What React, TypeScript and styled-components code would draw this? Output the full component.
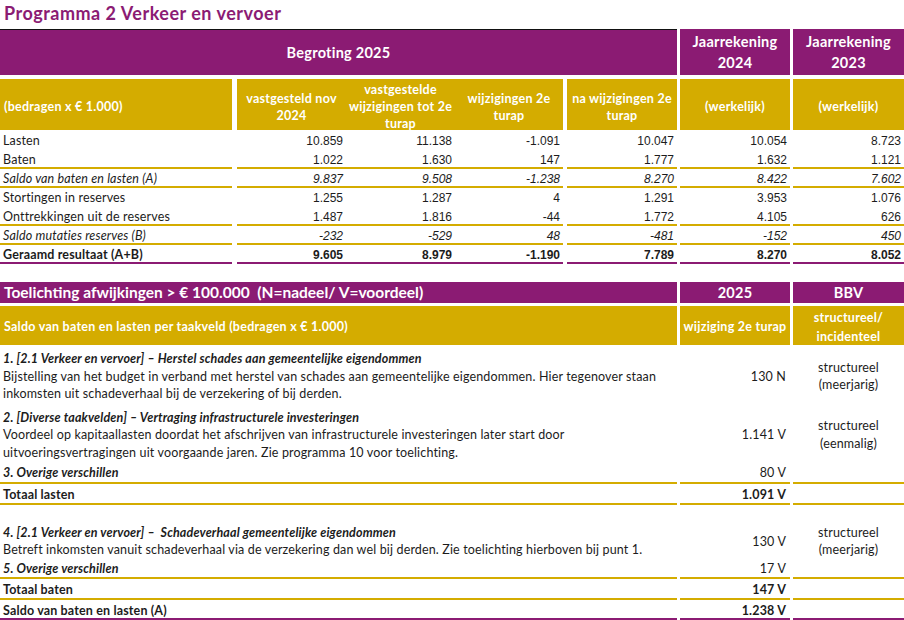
import React from "react";
import styled, { createGlobalStyle } from "styled-components";

const PURPLE = "#8b1b73";
const OCHRE = "#d4ac00";
const INK = "#1c1c1c";

const GlobalStyle = createGlobalStyle`
  html, body {
    margin: 0;
    padding: 0;
    background: #fff;
  }
  body {
    font-family: Lato, "Noto Sans", sans-serif;
    font-size: 12.5px;
    letter-spacing: 0.15px;
    color: ${INK};
  }
  * {
    box-sizing: border-box;
  }
`;

type Rule = "none" | "ochre" | "purple";
type Kind = "plain" | "italic" | "bold";

const ruleColor = (r: Rule) =>
  r === "ochre" ? OCHRE : r === "purple" ? PURPLE : "transparent";
const ruleLine = (r?: Rule) =>
  !r || r === "none" ? "none" : `2px solid ${ruleColor(r)}`;

const Page = styled.div`
  width: 904px;
  display: flex;
  flex-direction: column;
`;

const Title = styled.h1`
  margin: 0;
  height: 29px;
  padding: 3px 0 0 4px;
  font-size: 18px;
  line-height: 21px;
  letter-spacing: 0.5px;
  font-weight: 700;
  color: ${PURPLE};
`;

const BandRow = styled.div<{ $h: number; $mt?: number }>`
  display: flex;
  height: ${p => p.$h}px;
  margin-top: ${p => p.$mt ?? 0}px;
`;

const HeadCell = styled.div<{
  $w: number;
  $gap?: number;
  $tone: "purple" | "ochre";
  $size: number;
  $lh: number;
  $pt?: number;
  $ls?: number;
  $left?: boolean;
  $topRule?: boolean;
}>`
  flex: none;
  width: ${p => p.$w}px;
  margin-left: ${p => p.$gap ?? 0}px;
  background: ${p => (p.$tone === "purple" ? PURPLE : OCHRE)};
  border-top: ${p => (p.$topRule ? "1px solid #111" : "none")};
  color: #fff;
  font-size: ${p => p.$size}px;
  line-height: ${p => p.$lh}px;
  letter-spacing: ${p => p.$ls ?? 0.25}px;
  font-weight: 700;
  display: flex;
  align-items: center;
  justify-content: ${p => (p.$left ? "flex-start" : "center")};
  text-align: ${p => (p.$left ? "left" : "center")};
  padding: ${p => p.$pt ?? 0}px 2px 0 ${p => (p.$left ? 4 : 2)}px;
  white-space: pre;
  overflow: hidden;
`;

const DataRow = styled.div<{ $mt?: number }>`
  display: flex;
  height: 19px;
  margin-top: ${p => p.$mt ?? 0}px;
`;

const DataCell = styled.div<{
  $w: number;
  $gap?: number;
  $rule: Rule;
  $kind: Kind;
  $num?: boolean;
}>`
  flex: none;
  width: ${p => p.$w}px;
  margin-left: ${p => p.$gap ?? 0}px;
  border-bottom: 2px solid ${p => ruleColor(p.$rule)};
  padding: 2px ${p => (p.$num ? 3 : 0)}px 0 ${p => (p.$num ? 0 : 3)}px;
  display: flex;
  align-items: center;
  justify-content: ${p => (p.$num ? "flex-end" : "flex-start")};
  font-family: ${p =>
    p.$num ? `"Liberation Sans", Arial, sans-serif` : `Lato, "Noto Sans", sans-serif`};
  font-size: ${p => (p.$num ? 12 : 12.5)}px;
  letter-spacing: ${p => (p.$num ? 0 : 0.15)}px;
  font-style: ${p => (p.$kind === "italic" ? "italic" : "normal")};
  font-weight: ${p => (p.$kind === "bold" ? 700 : 400)};
  white-space: nowrap;
`;

const NoteRow = styled.div<{ $pt?: number }>`
  display: flex;
  padding-top: ${p => p.$pt ?? 0}px;
`;

const NoteText = styled.div<{ $rule?: Rule }>`
  flex: none;
  width: 677px;
  padding-left: 3px;
  line-height: 17.5px;
  border-bottom: ${p => ruleLine(p.$rule)};
  white-space: pre;
`;

const NoteTitle = styled.div`
  font-weight: 700;
  font-style: italic;
`;

const NoteValue = styled.div<{ $rule?: Rule; $bold?: boolean; $pt?: number }>`
  flex: none;
  width: 110px;
  margin-left: 3px;
  padding: ${p => p.$pt ?? 0}px 4px 0 0;
  display: flex;
  align-items: center;
  justify-content: flex-end;
  font-weight: ${p => (p.$bold ? 700 : 400)};
  border-bottom: ${p => ruleLine(p.$rule)};
`;

const NoteBbv = styled.div<{ $rule?: Rule }>`
  flex: none;
  width: 111px;
  margin-left: 3px;
  display: flex;
  flex-direction: column;
  align-items: center;
  justify-content: center;
  line-height: 17.5px;
  border-bottom: ${p => ruleLine(p.$rule)};
`;

const TotalRow = styled.div<{ $h: number }>`
  display: flex;
  height: ${p => p.$h}px;
`;

const TotalLabel = styled.div<{ $rule: Rule; $pt: number }>`
  flex: none;
  width: 677px;
  padding: ${p => p.$pt}px 0 0 3px;
  display: flex;
  align-items: center;
  font-weight: 700;
  border-bottom: ${p => ruleLine(p.$rule)};
`;

const Spacer = styled.div`
  height: 15px;
`;

const COLS = [
  { w: 232, gap: 0 },
  { w: 109, gap: 5 },
  { w: 109, gap: 0 },
  { w: 108, gap: 0 },
  { w: 110, gap: 4 },
  { w: 110, gap: 3 },
  { w: 111, gap: 3 },
];

const subHeads = [
  "(bedragen x € 1.000)",
  "vastgesteld nov\n2024",
  "vastgestelde\nwijzigingen tot 2e\nturap",
  "wijzigingen 2e\nturap",
  "na wijzigingen 2e\nturap",
  "(werkelijk)",
  "(werkelijk)",
];

const rows: { label: string; values: string[]; kind: Kind; rule: Rule }[] = [
  { label: "Lasten", values: ["10.859", "11.138", "-1.091", "10.047", "10.054", "8.723"], kind: "plain", rule: "none" },
  { label: "Baten", values: ["1.022", "1.630", "147", "1.777", "1.632", "1.121"], kind: "plain", rule: "ochre" },
  { label: "Saldo van baten en lasten (A)", values: ["9.837", "9.508", "-1.238", "8.270", "8.422", "7.602"], kind: "italic", rule: "ochre" },
  { label: "Stortingen in reserves", values: ["1.255", "1.287", "4", "1.291", "3.953", "1.076"], kind: "plain", rule: "none" },
  { label: "Onttrekkingen uit de reserves", values: ["1.487", "1.816", "-44", "1.772", "4.105", "626"], kind: "plain", rule: "ochre" },
  { label: "Saldo mutaties reserves (B)", values: ["-232", "-529", "48", "-481", "-152", "450"], kind: "italic", rule: "ochre" },
  { label: "Geraamd resultaat (A+B)", values: ["9.605", "8.979", "-1.190", "7.789", "8.270", "8.052"], kind: "bold", rule: "purple" },
];

interface INote {
  title: string;
  lines: string[];
  value: string;
  bbv?: string[];
  rule?: Rule;
}

function Note({ note, pt }: { note: INote; pt?: number }) {
  return (
    <NoteRow $pt={pt}>
      <NoteText $rule={note.rule}>
        <NoteTitle>{note.title}</NoteTitle>
        {note.lines.map((l, i) => (
          <div key={i}>{l}</div>
        ))}
      </NoteText>
      <NoteValue $rule={note.rule}>{note.value}</NoteValue>
      <NoteBbv $rule={note.rule}>
        {note.bbv && note.bbv.map((b, i) => <span key={i}>{b}</span>)}
      </NoteBbv>
    </NoteRow>
  );
}

function Total({ label, value, rule, h, pt }: { label: string; value: string; rule: Rule; h: number; pt: number }) {
  return (
    <TotalRow $h={h}>
      <TotalLabel $rule={rule} $pt={pt}>{label}</TotalLabel>
      <NoteValue $rule={rule} $bold $pt={pt}>
        {value}
      </NoteValue>
      <NoteBbv $rule={rule} />
    </TotalRow>
  );
}

export default function App() {
  return (
    <Page>
      <GlobalStyle />
      <Title>Programma 2 Verkeer en vervoer</Title>

      <BandRow $h={46}>
        <HeadCell $w={677} $tone="purple" $size={14.5} $lh={21} $topRule>
          Begroting 2025
        </HeadCell>
        <HeadCell $w={110} $gap={3} $tone="purple" $size={14.5} $lh={21}>
          {"Jaarrekening\n2024"}
        </HeadCell>
        <HeadCell $w={111} $gap={3} $tone="purple" $size={14.5} $lh={21}>
          {"Jaarrekening\n2023"}
        </HeadCell>
      </BandRow>
      <BandRow $h={51} $mt={4}>
        {subHeads.map((h, i) => (
          <HeadCell
            key={i}
            $w={COLS[i].w}
            $gap={COLS[i].gap}
            $tone="ochre"
            $size={12.5}
            $lh={17}
            $pt={4}
            $left={i === 0}
          >
            {h}
          </HeadCell>
        ))}
      </BandRow>

      {rows.map((r, ri) => (
        <DataRow key={r.label} $mt={ri === 0 ? 1 : 0}>
          <DataCell $w={COLS[0].w} $rule={r.rule} $kind={r.kind}>
            {r.label}
          </DataCell>
          {r.values.map((v, i) => (
            <DataCell
              key={i}
              $w={COLS[i + 1].w}
              $gap={COLS[i + 1].gap}
              $rule={r.rule}
              $kind={r.kind}
              $num
            >
              {v}
            </DataCell>
          ))}
        </DataRow>
      ))}

      <BandRow $h={21} $mt={18}>
        <HeadCell $w={677} $tone="purple" $size={15.5} $lh={21} $ls={0} $left>
          {"Toelichting afwijkingen > € 100.000  (N=nadeel/ V=voordeel)"}
        </HeadCell>
        <HeadCell $w={110} $gap={3} $tone="purple" $size={14.5} $lh={21}>
          2025
        </HeadCell>
        <HeadCell $w={111} $gap={3} $tone="purple" $size={14.5} $lh={21}>
          BBV
        </HeadCell>
      </BandRow>
      <BandRow $h={39} $mt={3}>
        <HeadCell $w={677} $tone="ochre" $size={12.5} $lh={17} $pt={2} $left>
          Saldo van baten en lasten per taakveld (bedragen x € 1.000)
        </HeadCell>
        <HeadCell $w={110} $gap={3} $tone="ochre" $size={12.5} $lh={17} $pt={2}>
          wijziging 2e turap
        </HeadCell>
        <HeadCell $w={111} $gap={3} $tone="ochre" $size={12.5} $lh={19} $pt={2}>
          {"structureel/\nincidenteel"}
        </HeadCell>
      </BandRow>

      <Note
        pt={5}
        note={{
          title: "1. [2.1 Verkeer en vervoer] – Herstel schades aan gemeentelijke eigendommen",
          lines: [
            "Bijstelling van het budget in verband met herstel van schades aan gemeentelijke eigendommen. Hier tegenover staan",
            "inkomsten uit schadeverhaal bij de verzekering of bij derden.",
          ],
          value: "130 N",
          bbv: ["structureel", "(meerjarig)"],
        }}
      />
      <Note
        pt={6}
        note={{
          title: "2. [Diverse taakvelden] – Vertraging infrastructurele investeringen",
          lines: [
            "Voordeel op kapitaallasten doordat het afschrijven van infrastructurele investeringen later start door",
            "uitvoeringsvertragingen uit voorgaande jaren. Zie programma 10 voor toelichting.",
          ],
          value: "1.141 V",
          bbv: ["structureel", "(eenmalig)"],
        }}
      />
      <Note
        pt={3}
        note={{ title: "3. Overige verschillen", lines: [], value: "80 V", rule: "ochre" }}
      />
      <Total label="Totaal lasten" value="1.091 V" rule="ochre" h={21} pt={2} />

      <Spacer />
      <Note
        pt={4}
        note={{
          title: "4. [2.1 Verkeer en vervoer] –  Schadeverhaal gemeentelijke eigendommen",
          lines: [
            "Betreft inkomsten vanuit schadeverhaal via de verzekering dan wel bij derden. Zie toelichting hierboven bij punt 1.",
          ],
          value: "130 V",
          bbv: ["structureel", "(meerjarig)"],
        }}
      />
      <Note pt={1} note={{ title: "5. Overige verschillen", lines: [], value: "17 V", rule: "ochre" }} />
      <Total label="Totaal baten" value="147 V" rule="ochre" h={21} pt={2} />
      <Total label="Saldo van baten en lasten (A)" value="1.238 V" rule="purple" h={20} pt={3} />
    </Page>
  );
}
